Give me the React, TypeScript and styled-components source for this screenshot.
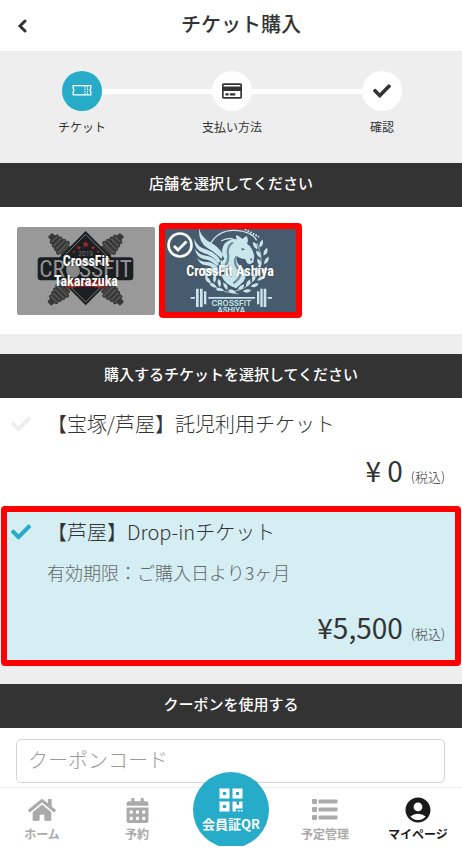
import React, { useState } from 'react';
import styled, { createGlobalStyle } from 'styled-components';
import { FaCheck, FaCalendarAlt, FaHome, FaQrcode, FaRegCreditCard } from 'react-icons/fa';
import { MdAccountCircle } from 'react-icons/md';

const teal = '#26acc9';
const dark = '#333';
const red = '#fe0000';

const GlobalStyle = createGlobalStyle`
  * { box-sizing: border-box; }
  body {
    margin: 0;
    background: #eee;
    color: ${dark};
    font-family: "Noto Sans CJK JP", sans-serif;
    font-weight: 300;
  }
  button, input { font: inherit; color: inherit; }
  svg { display: block; }
`;

const Page = styled.div`
  display: flex;
  flex-direction: column;
  min-height: 100vh;
`;

const Header = styled.header`
  display: grid;
  grid-template-columns: 44px 1fr 24px;
  align-items: center;
  height: 51px;
  background: #fff;
`;

const BackButton = styled.button`
  display: flex;
  justify-content: center;
  padding: 8px;
  border: 0;
  background: none;
`;

const Title = styled.h1`
  margin: 0;
  padding-bottom: 3px;
  text-align: center;
  font-size: 20px;
  line-height: 46px;
  font-weight: 500;
`;

const Steps = styled.ol`
  display: grid;
  grid-template-columns: repeat(3, 1fr);
  margin: 0;
  padding: 20px 5px 0 7px;
  height: 112px;
  list-style: none;
`;

const Step = styled.li`
  display: flex;
  flex-direction: column;
  align-items: center;
  gap: 7px;
  font-size: 12px;
  font-weight: 400;
  line-height: 18px;
`;

const StepTrack = styled.div<{ $first?: boolean; $last?: boolean }>`
  display: grid;
  grid-template-columns: 1fr 40px 1fr;
  align-items: center;
  width: 100%;
  &::before, &::after { content: ""; height: 5px; background: #fff; }
  &::before { visibility: ${p => (p.$first ? 'hidden' : 'visible')}; }
  &::after { visibility: ${p => (p.$last ? 'hidden' : 'visible')}; }
`;

const StepCircle = styled.span<{ $active?: boolean }>`
  display: flex;
  align-items: center;
  justify-content: center;
  height: 40px;
  border-radius: 50%;
  background: ${p => (p.$active ? teal : '#fff')};
  color: ${p => (p.$active ? '#fff' : dark)};
  font-size: 18px;
`;

const Section = styled.section`
  margin-bottom: 20px;
  background: #fff;
`;

const LastSection = styled(Section)`
  margin-bottom: 0;
  flex: 1;
`;

const SectionTitle = styled.h2`
  margin: 0;
  padding-bottom: 4px;
  background: ${dark};
  color: #fff;
  text-align: center;
  font-size: 15px;
  font-weight: 500;
  line-height: 40px;
`;

const Shops = styled.div`
  display: flex;
  gap: 6px;
  padding: 20px 17px 19px;
`;

const Shop = styled.button<{ $highlight?: boolean }>`
  position: relative;
  display: grid;
  width: 138px;
  height: 88px;
  padding: 0;
  border: 0;
  border-radius: 2px;
  background: ${p => (p.$highlight ? '#465b6d' : '#999')};
  & > svg { grid-area: 1 / 1; width: 138px; height: 88px; }
  &::after {
    content: "";
    display: ${p => (p.$highlight ? 'block' : 'none')};
    position: absolute;
    inset: -4px -3px -3px -2px;
    border: 6px solid ${red};
    border-radius: 4px;
  }
`;

const ShopName = styled.span<{ $narrow?: boolean }>`
  grid-area: 1 / 1;
  z-index: 1;
  align-self: center;
  justify-self: center;
  width: ${p => (p.$narrow ? '70px' : '110px')};
  color: #fff;
  font-family: "Roboto Condensed", Roboto, sans-serif;
  font-size: 14px;
  font-weight: 700;
  line-height: 20px;
  text-shadow: 0 0 2px rgba(0, 0, 0, .35);
`;

const ShopCheck = styled.span`
  position: absolute;
  top: 5px;
  left: 6px;
  z-index: 1;
`;

const Ticket = styled.button<{ $highlight?: boolean }>`
  display: grid;
  grid-template-columns: 47px 1fr;
  width: 100%;
  padding: 11px 17px 9px 0;
  border: 0;
  background: #fff;
  text-align: left;
  ${p => p.$highlight && `
    width: calc(100% - 2px);
    margin: 0 1px -2px;
    padding: 5px 10px 6px 0;
    grid-template-columns: 40px 1fr;
    border: 6px solid ${red};
    border-radius: 4px;
    background: #d4eef3;
  `}
`;

const TicketCheck = styled.span<{ $on?: boolean }>`
  padding: 5px 0 0 ${p => (p.$on ? '4px' : '11px')};
  color: ${p => (p.$on ? teal : '#eee')};
  font-size: 20px;
`;

const TicketName = styled.span`
  font-size: 20px;
  line-height: 30px;
`;

const TicketTerm = styled.span`
  grid-column: 2;
  padding-top: 12px;
  color: #666;
  font-size: 18px;
  line-height: 26px;
`;

const Price = styled.span<{ $spaced?: boolean }>`
  grid-column: 1 / -1;
  padding-top: ${p => (p.$spaced ? '22px' : '11px')};
  text-align: right;
  font-size: 28px;
  line-height: 40px;
  font-weight: 400;
`;

const Tax = styled.small`
  margin-left: 8px;
  font-size: 13px;
  font-weight: 300;
`;

const CouponInput = styled.input`
  display: block;
  width: calc(100% - 33px);
  height: 44px;
  margin: 11px 17px 4px 16px;
  padding: 0 11px 3px;
  border: 1px solid #d5d5d5;
  border-radius: 5px;
  background: #fff;
  font-size: 20px;
  &::placeholder { color: #999; opacity: 1; }
`;

const NavBar = styled.nav`
  position: sticky;
  bottom: 0;
  height: 65px;
  border-top: 1px solid #eee;
  background: #fff;
`;

const NavItems = styled.div`
  display: grid;
  grid-template-columns: 1fr 94px 94px 94px 1fr;
  align-items: start;
`;

const NavLink = styled.a<{ $active?: boolean; $edge?: 'left' | 'right' }>`
  display: flex;
  flex-direction: column;
  align-items: center;
  padding-top: 7px;
  padding-right: ${p => (p.$edge === 'left' ? '6px' : '0')};
  padding-left: ${p => (p.$edge === 'right' ? '2px' : '0')};
  color: ${p => (p.$active ? '#1a1a1a' : '#aaa')};
  font-size: 12px;
  font-weight: 700;
  line-height: 18px;
  text-decoration: none;
  white-space: nowrap;
`;

const NavIcon = styled.span`
  display: flex;
  align-items: center;
  justify-content: center;
  height: 30px;
`;

const QrSlot = styled.div`
  display: flex;
  justify-content: center;
  height: 74px;
  margin-top: -16px;
  overflow: hidden;
`;

const QrLink = styled.a`
  display: flex;
  flex-direction: column;
  align-items: center;
  flex: none;
  gap: 1px;
  width: 76px;
  height: 76px;
  padding-top: 14px;
  border-radius: 50%;
  background: ${teal};
  color: #fff;
  font-size: 13px;
  font-weight: 700;
  line-height: 18px;
  text-decoration: none;
  white-space: nowrap;
`;

const BackIcon = () => (
  <svg width="10" height="14" viewBox="0 0 10 14" fill="none" stroke={dark} strokeWidth="3">
    <path d="M8 2 3 7l5 5" strokeLinecap="round" />
  </svg>
);

const TicketIcon = () => (
  <svg width="20" height="14" viewBox="0 0 20 14" fill="none" stroke="#fff">
    <path d="M1.2 1.7h17.6v2.8q-1.6 1.5 0 3v3.3H1.2V7.5q1.6-1.5 0-3z" strokeWidth="1.3" />
    <path d="M13 2v9M15.5 2v9" strokeDasharray="1.6 .8" />
  </svg>
);

const CircleCheckIcon = () => (
  <svg width="26" height="26" viewBox="0 0 26 26" fill="none" stroke="#fff">
    <circle cx="13" cy="13" r="11.5" strokeWidth="2.6" />
    <path d="M7 14l4 4 8.5-8.5" strokeWidth="2.8" />
  </svg>
);

const QrIcon = () => (
  <svg width="28" height="28" viewBox="0 0 28 28" fill="none" stroke="#fff" strokeWidth="3.4">
    <path d="M4.2 4.2h6.6v6.6H4.2zM17.2 4.2h6.6v6.6h-6.6zM4.2 17.2h6.6v6.6H4.2z" />
    <path d="M15.5 15.5h4v3.2h2.6v-3.2h3.4v7h-6.6v3h-3.4zM20.8 24h1.8v1.5h-1.8zM23.8 24h1.8v1.5h-1.8z" fill="#fff" stroke="none" />
  </svg>
);

const ListIcon = () => (
  <svg width="30" height="30" viewBox="0 0 30 30" fill="currentColor">
    {[4, 12, 20].map(y => (
      <g key={y}>
        <rect x="2" y={y} width="5" height="5" rx="1" />
        <rect x="8.5" y={y + 0.5} width="19" height="4" rx="1" />
      </g>
    ))}
  </svg>
);

const Barbell = ({ x, y, turn }: { x: number; y: number; turn: number }) => (
  <g transform={`translate(${x} ${y}) rotate(${turn})`}>
    <rect x="-40" y="-9" width="18" height="18" rx="4" fill="#383838" />
    {[-26, -14, -2, 10].map((dx, i) => (
      <rect key={dx} x={dx} y={-16 - i * 3} width="10" height={32 + i * 6} rx="5" fill="#505050" stroke="#2e2e2e" strokeWidth="3" />
    ))}
    <rect x="22" y="-20" width="10" height="40" rx="5" fill="#3a3a3a" />
  </g>
);

const TakarazukaLogo = () => (
  <svg viewBox="51 36 414 264" aria-hidden="true">
    <Barbell x={178} y={88} turn={45} />
    <Barbell x={338} y={88} turn={135} />
    <Barbell x={176} y={238} turn={-45} />
    <Barbell x={338} y={238} turn={-135} />
    <path d="M257 48 368 160 257 271 146 160z" fill="#1c1f21" />
    <path d="M257 58 358 160 257 261 156 160z" fill="none" stroke="#777" strokeWidth="3" />
    {[[257, 88, 10], [236, 98, 7], [279, 98, 7], [222, 110, 5], [294, 110, 5]].map(([x, y, r]) => (
      <path
        key={x}
        transform={`translate(${x} ${y}) scale(${r / 10})`}
        d="M0-10 3-3 10-3 4 2 7 9 0 5-7 9-4 2-10-3-3-3z"
        fill="#a62a2a"
      />
    ))}
    <text x="257" y="123" textAnchor="middle" fontSize="20" fontFamily="Roboto" fill="#999">2019</text>
    <rect x="113" y="127" width="287" height="69" rx="10" fill="#1c1f21" />
    <text x="257" y="187" textAnchor="middle" fontSize="70" fontWeight="400" fontFamily="Roboto Condensed, Roboto, sans-serif" fill="#929292">CROSSFIT</text>
    <circle cx="220" cy="168" r="20" fill="#888" />
    <path d="M188 197h138l-14 24q-55-12-110 0z" fill="#922020" />
    <path d="M214 212q43-10 86 0" stroke="#b98080" strokeWidth="8" strokeDasharray="6 4" fill="none" />
  </svg>
);

const leaves: number[][] = [
  [300, 92, 60], [318, 86, 110], [310, 118, 60], [331, 110, 115], [312, 143, 70], [334, 136, 120],
  [306, 168, 85], [328, 165, 130], [295, 188, 100], [317, 189, 145], [279, 204, 120], [299, 210, 160],
  [258, 216, 140], [276, 227, 175], [152, 178, 70], [168, 170, 115], [158, 196, 50], [178, 190, 95],
  [174, 212, 30], [192, 204, 80], [194, 224, 10], [211, 214, 60], [231, 230, 20],
];

const AshiyaLogo = () => (
  <svg viewBox="18 36 414 264" aria-hidden="true" fill="#c9e6ec">
    <path d="M165 88Q190 44 240 46T305 76" fill="none" stroke="#c9e6ec" strokeWidth="4" />
    <path d="M262 38 312 66" fill="none" stroke="#c9e6ec" strokeWidth="6" strokeDasharray="5 4" />
    <path d="M132 40Q139 68 165 82 190 94 204 119L199 132Q180 110 157 99 130 82 132 40z" />
    <path d="M117 70Q126 98 156 104 183 112 197 138L190 144Q171 120 147 115 118 106 117 70z" />
    <path d="M119 100Q130 121 158 123 178 127 192 148L186 153Q169 136 149 133 124 128 119 100z" />
    <path d="M127 130Q140 143 160 141 178 143 190 160L178 164Q166 151 151 151 134 149 127 130z" />
    <path d="M140 158Q155 162 168 159 184 160 194 173L180 178Q164 168 156 169 146 168 140 158z" />
    <path d="M204 96Q210 73 246 72 240 66 245 60 258 67 262 72L275 62Q282 76 276 86 292 96 298 123L295 142Q286 151 277 145L270 132Q253 131 247 123 240 145 262 158 282 173 265 200L243 220Q211 210 198 180 207 181 209 173 192 161 198 136 204 139 208 132 197 112 204 96z" />
    <path d="M234 82Q215 93 219 118 222 139 211 151M245 124Q232 144 253 166 264 184 235 205M218 151Q214 170 232 183" fill="none" stroke="#6e909c" strokeWidth="7" />
    <path d="M205 98Q218 77 238 78M198 78Q225 64 240 76" fill="none" stroke="#c9e6ec" strokeWidth="4" />
    <path d="M259 98l12 6-10 2zM284 132l8-2-3 8z" fill="#465b6d" />
    <path d="M306 84Q338 153 293 199 268 225 233 230M147 162Q157 210 210 230L250 237" fill="none" stroke="#c9e6ec" strokeWidth="2" />
    {leaves.map(([x, y, a]) => (
      <path key={`${x}-${y}`} transform={`translate(${x} ${y}) rotate(${a})`} d="M-13 0Q0-12 13 0 0 8-13 0z" />
    ))}
    <path d="M107 246h13v5h-13zM123 221h8v55h-8zM135 221h8v55h-8zM147 229h7v39h-7zM160 246h140v5H160zM306 229h7v39h-7zM316 221h7v55h-7zM326 221h8v55h-8zM338 246h13v5h-13z" />
    <text x="229" y="273" textAnchor="middle" fontSize="24" fontWeight="600" fontFamily="Inter">CROSSFIT</text>
    <text x="229" y="294" textAnchor="middle" fontSize="22" fontWeight="600" fontFamily="Inter">ASHIYA</text>
  </svg>
);

export default function App() {
  const [coupon, setCoupon] = useState('');
  return (
    <>
      <GlobalStyle />
      <Page>
        <Header>
          <BackButton type="button" aria-label="戻る"><BackIcon /></BackButton>
          <Title>チケット購入</Title>
        </Header>
        <Steps>
          <Step>
            <StepTrack $first><StepCircle $active><TicketIcon /></StepCircle></StepTrack>
            チケット
          </Step>
          <Step>
            <StepTrack><StepCircle><FaRegCreditCard size={20} /></StepCircle></StepTrack>
            支払い方法
          </Step>
          <Step>
            <StepTrack $last><StepCircle><FaCheck /></StepCircle></StepTrack>
            確認
          </Step>
        </Steps>
        <Section>
          <SectionTitle>店舗を選択してください</SectionTitle>
          <Shops>
            <Shop type="button" aria-pressed={false}>
              <TakarazukaLogo />
              <ShopName $narrow>CrossFit Takarazuka</ShopName>
            </Shop>
            <Shop type="button" aria-pressed $highlight>
              <AshiyaLogo />
              <ShopName>CrossFit Ashiya</ShopName>
              <ShopCheck><CircleCheckIcon /></ShopCheck>
            </Shop>
          </Shops>
        </Section>
        <Section>
          <SectionTitle>購入するチケットを選択してください</SectionTitle>
          <Ticket type="button" aria-pressed={false}>
            <TicketCheck><FaCheck /></TicketCheck>
            <TicketName>【宝塚/芦屋】託児利用チケット</TicketName>
            <Price>¥ 0<Tax>(税込)</Tax></Price>
          </Ticket>
          <Ticket type="button" aria-pressed $highlight>
            <TicketCheck $on><FaCheck /></TicketCheck>
            <TicketName>【芦屋】Drop-inチケット</TicketName>
            <TicketTerm>有効期限：ご購入日より3ヶ月</TicketTerm>
            <Price $spaced>¥5,500<Tax>(税込)</Tax></Price>
          </Ticket>
        </Section>
        <LastSection>
          <SectionTitle>クーポンを使用する</SectionTitle>
          <CouponInput
            type="text"
            aria-label="クーポンコード"
            placeholder="クーポンコード"
            value={coupon}
            onChange={e => setCoupon(e.target.value)}
          />
        </LastSection>
        <NavBar>
          <NavItems>
            <NavLink href="#home" $edge="left"><NavIcon><FaHome size={28} /></NavIcon>ホーム</NavLink>
            <NavLink href="#reserve"><NavIcon><FaCalendarAlt size={25} /></NavIcon>予約</NavLink>
            <QrSlot><QrLink href="#qr"><QrIcon />会員証QR</QrLink></QrSlot>
            <NavLink href="#schedule"><NavIcon><ListIcon /></NavIcon>予定管理</NavLink>
            <NavLink href="#mypage" $active $edge="right"><NavIcon><MdAccountCircle size={30} /></NavIcon>マイページ</NavLink>
          </NavItems>
        </NavBar>
      </Page>
    </>
  );
}
